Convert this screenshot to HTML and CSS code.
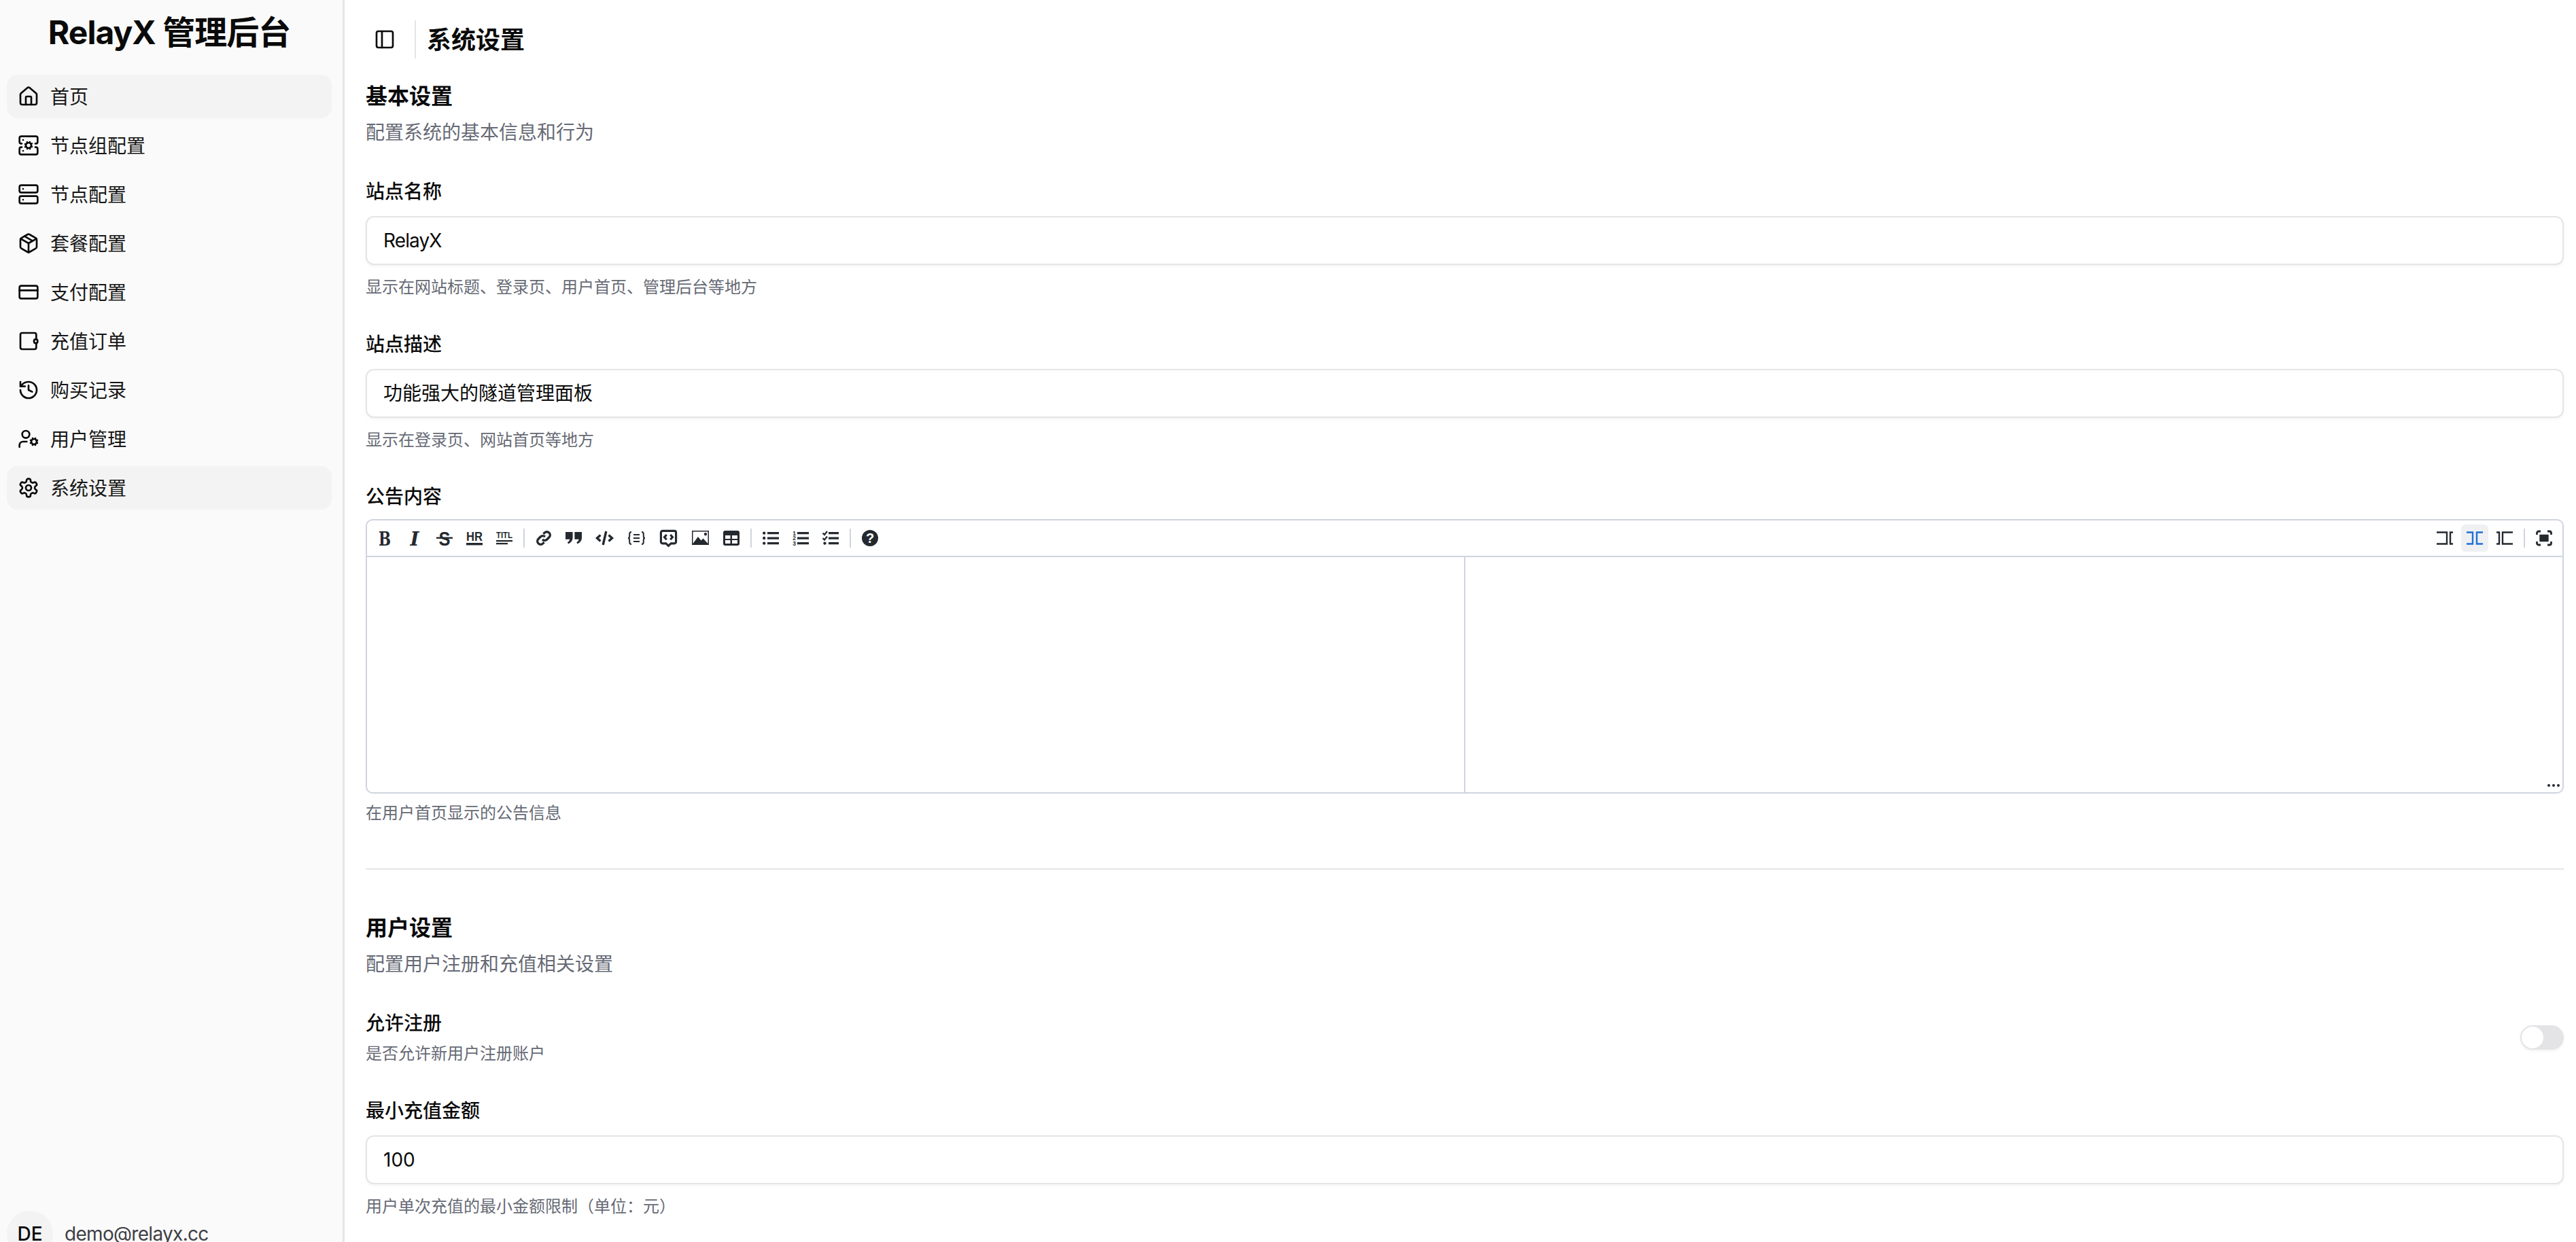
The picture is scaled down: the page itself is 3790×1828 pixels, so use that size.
FILE: index.html
```html
<!DOCTYPE html>
<html lang="zh-CN">
  <head>
    <meta charset="UTF-8" />
    <meta name="viewport" content="width=device-width, initial-scale=1.0" />
    <title>系统设置</title>
    <link rel="stylesheet" href="styles.css">
  </head>
  <body>
    <div class="layout">
      <!-- Sidebar -->
      <aside class="sidebar">
        <div class="brand">RelayX 管理后台</div>
        <nav class="nav">
          <a class="nav-item active">
            <svg class="lucide" viewBox="0 0 24 24"><path d="M15 21v-8a1 1 0 0 0-1-1h-4a1 1 0 0 0-1 1v8"/><path d="M3 10a2 2 0 0 1 .709-1.528l7-5.999a2 2 0 0 1 2.582 0l7 5.999A2 2 0 0 1 21 10v9a2 2 0 0 1-2 2H5a2 2 0 0 1-2-2z"/></svg>
            <span>首页</span>
          </a>
          <a class="nav-item">
            <svg class="lucide" viewBox="0 0 24 24"><circle cx="12" cy="12" r="3"/><path d="M4.5 10H4a2 2 0 0 1-2-2V4a2 2 0 0 1 2-2h16a2 2 0 0 1 2 2v4a2 2 0 0 1-2 2h-.5"/><path d="M4.5 14H4a2 2 0 0 0-2 2v4a2 2 0 0 0 2 2h16a2 2 0 0 0 2-2v-4a2 2 0 0 0-2-2h-.5"/><path d="M6 6h.01"/><path d="M6 18h.01"/><path d="m15.7 13.4-.9-.3"/><path d="m9.2 10.9-.9-.3"/><path d="m10.6 15.7.3-.9"/><path d="m13.6 15.7-.4-1"/><path d="m10.8 9.3-.4-1"/><path d="m8.3 13.6 1-.4"/><path d="m14.7 10.4 1-.4"/><path d="m13.4 8.3-.3.9"/></svg>
            <span>节点组配置</span>
          </a>
          <a class="nav-item">
            <svg class="lucide" viewBox="0 0 24 24"><rect x="2" y="2" width="20" height="8" rx="2"/><rect x="2" y="14" width="20" height="8" rx="2"/><path d="M6 6h.01"/><path d="M6 18h.01"/></svg>
            <span>节点配置</span>
          </a>
          <a class="nav-item">
            <svg class="lucide" viewBox="0 0 24 24"><path d="M11 21.73a2 2 0 0 0 2 0l7-4A2 2 0 0 0 21 16V8a2 2 0 0 0-1-1.73l-7-4a2 2 0 0 0-2 0l-7 4A2 2 0 0 0 3 8v8a2 2 0 0 0 1 1.73z"/><path d="M12 22V12"/><path d="m3.3 7 8.7 5 8.7-5"/><path d="m7.5 4.27 9 5.15"/></svg>
            <span>套餐配置</span>
          </a>
          <a class="nav-item">
            <svg class="lucide" viewBox="0 0 24 24"><rect x="2" y="5" width="20" height="14" rx="2"/><path d="M2 10h20"/></svg>
            <span>支付配置</span>
          </a>
          <a class="nav-item">
            <svg class="lucide" viewBox="0 0 24 24"><path d="M20.500 10V5a2 2 0 0 0-2-2H5a2 2 0 0 0-2 2v14a2 2 0 0 0 2 2h13.500a2 2 0 0 0 2-2v-4.600"/><rect x="18" y="10" width="4" height="4.400" rx="2"/></svg>
            <span>充值订单</span>
          </a>
          <a class="nav-item">
            <svg class="lucide" viewBox="0 0 24 24"><path d="M3 12a9 9 0 1 0 9-9 9.75 9.75 0 0 0-6.74 2.74L3 8"/><path d="M3 3v5h5"/><path d="M12 7v5l4 2"/></svg>
            <span>购买记录</span>
          </a>
          <a class="nav-item">
            <svg class="lucide" viewBox="0 0 24 24"><path d="M10 15H6a4 4 0 0 0-4 4v2"/><circle cx="9" cy="7" r="4"/><circle cx="18" cy="15" r="3"/><path d="m14.305 16.53.923-.382"/><path d="m15.228 13.852-.923-.383"/><path d="m16.852 12.228-.383-.923"/><path d="m16.852 17.772-.383.924"/><path d="m19.148 12.228.383-.923"/><path d="m19.53 18.696-.382-.924"/><path d="m20.772 13.852.924-.383"/><path d="m20.772 16.148.924.383"/></svg>
            <span>用户管理</span>
          </a>
          <a class="nav-item active">
            <svg class="lucide" viewBox="0 0 24 24"><path d="M12.22 2h-.44a2 2 0 0 0-2 2v.18a2 2 0 0 1-1 1.73l-.43.25a2 2 0 0 1-2 0l-.15-.08a2 2 0 0 0-2.73.73l-.22.38a2 2 0 0 0 .73 2.73l.15.1a2 2 0 0 1 1 1.72v.51a2 2 0 0 1-1 1.74l-.15.09a2 2 0 0 0-.73 2.73l.22.38a2 2 0 0 0 2.73.73l.15-.08a2 2 0 0 1 2 0l.43.25a2 2 0 0 1 1 1.73V20a2 2 0 0 0 2 2h.44a2 2 0 0 0 2-2v-.18a2 2 0 0 1 1-1.73l.43-.25a2 2 0 0 1 2 0l.15.08a2 2 0 0 0 2.73-.73l.22-.39a2 2 0 0 0-.73-2.73l-.15-.08a2 2 0 0 1-1-1.74v-.5a2 2 0 0 1 1-1.74l.15-.09a2 2 0 0 0 .73-2.73l-.22-.38a2 2 0 0 0-2.73-.73l-.15.08a2 2 0 0 1-2 0l-.43-.25a2 2 0 0 1-1-1.73V4a2 2 0 0 0-2-2z"/><circle cx="12" cy="12" r="3"/></svg>
            <span>系统设置</span>
          </a>
        </nav>
        <div class="account">
          <div class="avatar">DE</div>
          <div class="email">demo@relayx.cc</div>
        </div>
      </aside>

      <main class="main">
        <!-- Header -->
        <header class="topbar">
          <svg class="toggle" viewBox="0 0 24 24"><rect x="3" y="3" width="18" height="18" rx="2"/><path d="M9 3v18"/></svg>
          <div class="topbar-line"></div>
          <h1 class="page-title">系统设置</h1>
        </header>

        <section class="section">
          <h2 class="section-title">基本设置</h2>
          <p class="section-desc">配置系统的基本信息和行为</p>

          <div class="field">
            <div class="label">站点名称</div>
            <div class="input latin">RelayX</div>
            <div class="hint">显示在网站标题、登录页、用户首页、管理后台等地方</div>
          </div>

          <div class="field">
            <div class="label">站点描述</div>
            <div class="input">功能强大的隧道管理面板</div>
            <div class="hint">显示在登录页、网站首页等地方</div>
          </div>

          <div class="field">
            <div class="label label-tight">公告内容</div>
            <div class="editor">
              <div class="toolbar">
                <div class="tools">
                  <span class="tool"><svg viewBox="0 0 24 24"><text class="glyph-b" x="12" y="22.500" textLength="18" lengthAdjust="spacingAndGlyphs">B</text></svg></span>
                  <span class="tool"><svg viewBox="0 0 24 24"><text class="glyph-i" x="12" y="22.500" textLength="13" lengthAdjust="spacingAndGlyphs">I</text></svg></span>
                  <span class="tool"><svg viewBox="0 0 24 24"><text class="glyph-s" x="12" y="22.500" textLength="17" lengthAdjust="spacingAndGlyphs">S</text><path class="fill" d="M0 10.500h24v2.400H0z"/></svg></span>
                  <span class="tool"><svg viewBox="0 0 24 24"><text class="glyph-hr" x="12" y="15.500" textLength="24" lengthAdjust="spacingAndGlyphs">HR</text><path class="fill" d="M0 19h24v3.400H0z"/></svg></span>
                  <span class="tool"><svg viewBox="0 0 24 24"><text class="glyph-title" x="12" y="12" textLength="24" lengthAdjust="spacingAndGlyphs">TITL</text><path class="fill" d="M0 15h24v2.200H0zM0 19h17v2.200H0z"/></svg></span>
                  <span class="tool-sep"></span>
                  <span class="tool"><svg class="line" viewBox="0 0 24 24"><path d="M10 14a4.700 4.700 0 0 0 6.700 0l3.200-3.200a4.700 4.700 0 0 0-6.700-6.700l-1.800 1.800"/><path d="M14 10a4.700 4.700 0 0 0-6.700 0l-3.200 3.200a4.700 4.700 0 0 0 6.700 6.700l1.800-1.800"/></svg></span>
                  <span class="tool"><svg viewBox="0 0 24 24"><path class="fill" d="M0 3h10.600v8.700c0 3.600-2.200 6.600-6.400 8.800l-1.300-2.300c2-1.200 3.200-2.600 3.400-4.500H0zM13.400 3H24v8.700c0 3.600-2.200 6.600-6.400 8.800l-1.300-2.300c2-1.200 3.200-2.600 3.400-4.500h-6.300z"/></svg></span>
                  <span class="tool wide"><svg class="line" viewBox="0 0 27 24"><path d="M7.500 7.500 2.500 12l5 4.500"/><path d="M19.500 7.500l5 4.500-5 4.500"/><path d="M15.800 2l-4.600 20"/></svg></span>
                  <span class="tool wide"><svg class="line thin" viewBox="0 0 27 24"><path d="M6 3c-2.500 0-2.800 1.400-2.800 3v3.200c0 1.600-.6 2.800-2.200 2.800 1.600 0 2.200 1.200 2.200 2.800V18c0 1.600.3 3 2.800 3"/><path d="M21 3c2.500 0 2.800 1.400 2.800 3v3.200c0 1.600.6 2.800 2.200 2.800-1.600 0-2.200 1.200-2.200 2.800V18c0 1.600-.3 3-2.800 3"/><path d="M9 7h9M9 12h9M9 17h9"/></svg></span>
                  <span class="tool wide"><svg class="line" viewBox="0 0 27 26"><path d="M4 1.500h19a2.500 2.500 0 0 1 2.500 2.500v15a2.500 2.500 0 0 1-2.500 2.500h-5.500l-4 3.800-4-3.800H4A2.500 2.500 0 0 1 1.500 19V4A2.500 2.500 0 0 1 4 1.500z"/><path d="M10.500 7.500 7 11.500l3.500 4"/><path d="M16.500 7.500l3.500 4-3.500 4"/></svg></span>
                  <span class="tool wide"><svg viewBox="0 0 27 24"><path class="fill" fill-rule="evenodd" d="M1 1h25v21H1zM2.500 2.500V20l7.500-10 4.500 5.500 3-3L24.500 20V2.500zM21 4a2.200 2.200 0 1 1-.01 0z"/></svg></span>
                  <span class="tool"><svg viewBox="0 0 24 24"><path class="fill" fill-rule="evenodd" d="M3 1h18a3 3 0 0 1 3 3v16a3 3 0 0 1-3 3H3a3 3 0 0 1-3-3V4a3 3 0 0 1 3-3zM3 8v5h7.500V8zM13 8v5h8V8zM3 15v5h7.500v-5zM13 15v5h8v-5z"/></svg></span>
                  <span class="tool-sep"></span>
                  <span class="tool"><svg viewBox="0 0 24 24"><path class="fill" d="M7 3h17v3.200H7zM7 10.500h17v3.200H7zM7 18h17v3.200H7z"/><circle class="fill" cx="2.200" cy="4.600" r="2.200"/><circle class="fill" cx="2.200" cy="12" r="2.200"/><circle class="fill" cx="2.200" cy="19.600" r="2.200"/></svg></span>
                  <span class="tool"><svg viewBox="0 0 24 24"><path class="fill" d="M7 3h17v3.200H7zM7 10.500h17v3.200H7zM7 18h17v3.200H7z"/><text class="glyph-num" x="2.500" y="7.500">1</text><text class="glyph-num" x="2.500" y="15">2</text><text class="glyph-num" x="2.500" y="23">3</text></svg></span>
                  <span class="tool"><svg viewBox="0 0 24 24"><path class="fill" d="M9 3h15v3.200H9zM9 10.500h15v3.200H9zM9 18h15v3.200H9z"/><path class="check" d="M0.500 4.500 3 7l4-5M0.500 12 3 14.500l4-5"/><circle class="fill" cx="3.500" cy="19.600" r="2.200"/></svg></span>
                  <span class="tool-sep"></span>
                  <span class="tool"><svg viewBox="0 0 24 24"><circle class="fill" cx="12" cy="12" r="12"/><text class="glyph-help" x="12" y="19">?</text></svg></span>
                </div>
                <div class="tools">
                  <span class="tool"><svg viewBox="0 0 24 24"><path class="split" d="M0 3.500h15v17H0"/><path class="split" d="M24 3.500h-4v17h4"/></svg></span>
                  <span class="tool on"><svg viewBox="0 0 24 24"><path class="split" d="M0 3.500h9v17H0"/><path class="split" d="M24 3.500h-9v17h9"/></svg></span>
                  <span class="tool"><svg viewBox="0 0 24 24"><path class="split" d="M0 3.500h4v17H0"/><path class="split" d="M24 3.500H9v17h15"/></svg></span>
                  <span class="tool-sep"></span>
                  <span class="tool"><svg viewBox="0 0 24 24"><path class="frame" d="M1.500 7V4.500a2.500 2.500 0 0 1 2.500-2.500h3M17 2h3a2.500 2.500 0 0 1 2.500 2.500V7M22.500 17v2.500A2.500 2.500 0 0 1 20 22h-3M7 22H4a2.500 2.500 0 0 1-2.500-2.500V17"/><path class="fill" d="M6 6.700h12a.7.7 0 0 1 .7.7v9.200a.7.7 0 0 1-.7.7H6a.7.7 0 0 1-.7-.7V7.400a.7.7 0 0 1 .7-.7z"/></svg></span>
                </div>
              </div>
              <div class="panes">
                <div class="pane"></div>
                <div class="pane">
                  <div class="grip"><i></i><i></i><i></i></div>
                </div>
              </div>
            </div>
            <div class="hint hint-tight">在用户首页显示的公告信息</div>
          </div>
        </section>

        <hr class="divider" />

        <section class="section">
          <h2 class="section-title">用户设置</h2>
          <p class="section-desc">配置用户注册和充值相关设置</p>

          <div class="switch-row">
            <div>
              <div class="switch-label">允许注册</div>
              <div class="switch-hint">是否允许新用户注册账户</div>
            </div>
            <div class="switch"><div class="knob"></div></div>
          </div>

          <div class="field">
            <div class="label">最小充值金额</div>
            <div class="input">100</div>
            <div class="hint">用户单次充值的最小金额限制（单位：元）</div>
          </div>
        </section>
      </main>
    </div>
  </body>
</html>
```

FILE: styles.css
```css
html,
body {
  margin: 0;
  padding: 0;
  height: 100%;
  overflow: hidden;
}

body {
  font-family: Inter, "Noto Sans CJK SC", sans-serif;
  color: #0a0a0a;
  background-color: #fff;
}

.layout {
  display: flex;
  align-items: flex-start;
}

/* 侧边栏 */
.sidebar {
  flex: none;
  box-sizing: border-box;
  width: 507px;
  height: 1868px;
  display: flex;
  flex-direction: column;
  padding: 0 16px 18px 10px;
  background-color: #fafafa;
  border-right: 3px solid #e5e5e5;
}

.brand {
  height: 96px;
  line-height: 96px;
  text-align: center;
  font-size: 48px;
  font-weight: 700;
  letter-spacing: -1px;
  margin-bottom: 14px;
}

.nav {
  display: flex;
  flex-direction: column;
  gap: 8px;
}

.nav-item {
  display: flex;
  align-items: center;
  gap: 16px;
  height: 64px;
  padding: 0 16px;
  border-radius: 16px;
  font-size: 28px;
  color: #171717;
}

.nav-item span {
  padding-bottom: 3px;
}

.nav-item.active {
  background-color: #f3f3f3;
}

.lucide {
  flex: none;
  width: 32px;
  height: 32px;
  fill: none;
  stroke: #0a0a0a;
  stroke-width: 2;
  stroke-linecap: round;
  stroke-linejoin: round;
}

.account {
  margin-top: auto;
  display: flex;
  align-items: center;
  gap: 17px;
}

.avatar {
  width: 68px;
  height: 68px;
  border-radius: 50%;
  background-color: #f3f3f3;
  display: flex;
  align-items: center;
  justify-content: center;
  font-size: 28px;
  font-weight: 500;
}

.email {
  font-size: 28px;
  letter-spacing: -0.7px;
  color: #3f3f46;
}

/* 主内容 */
.main {
  flex: 1;
  min-width: 0;
  padding: 0 18px 0 31px;
}

.topbar {
  display: flex;
  align-items: center;
  height: 116px;
}

.toggle {
  width: 32px;
  height: 32px;
  margin-left: 12px;
  fill: none;
  stroke: #0a0a0a;
  stroke-width: 2;
  stroke-linecap: round;
  stroke-linejoin: round;
}

.topbar-line {
  width: 2px;
  height: 56px;
  margin: 0 16px 0 28px;
  background-color: #e5e5e5;
}

.page-title {
  margin: 0 0 4px;
  font-size: 36px;
  font-weight: 600;
}

.section-title {
  margin: 2px 0 9px;
  font-size: 32px;
  line-height: 48px;
  font-weight: 600;
}

.section-desc {
  margin: 0 0 47px;
  font-size: 28px;
  line-height: 40px;
  color: #666a75;
}

.field {
  margin-bottom: 48px;
}

.label {
  margin-bottom: 16px;
  font-size: 28px;
  line-height: 40px;
  font-weight: 500;
}

.label-tight {
  margin-top: -1px;
  margin-bottom: 13px;
}

.input {
  box-sizing: border-box;
  height: 72px;
  line-height: 68px;
  padding: 0 24px;
  border: 2px solid #e5e5e5;
  border-radius: 12px;
  background-color: #fff;
  box-shadow: 0 2px 4px rgba(0, 0, 0, 0.05);
  font-size: 28px;
}

.input.latin {
  letter-spacing: -0.9px;
}

.hint {
  margin-top: 17px;
  font-size: 24px;
  line-height: 32px;
  color: #666a75;
}

.hint-tight {
  margin-top: 13px;
}

/* 公告编辑器 */
.editor {
  box-sizing: border-box;
  height: 404px;
  display: flex;
  flex-direction: column;
  border: 2px solid #cfd4de;
  border-radius: 10px;
}

.toolbar {
  flex: none;
  box-sizing: border-box;
  height: 54px;
  padding: 0 5px 0 4px;
  display: flex;
  align-items: center;
  justify-content: space-between;
  border-bottom: 2px solid #cfd4de;
}

.tools {
  display: flex;
  align-items: center;
}

.tool {
  display: block;
  padding: 8px;
  margin: 0 2px;
  border-radius: 6px;
  line-height: 0;
}

.tool svg {
  display: block;
  width: 24px;
  height: 24px;
  overflow: visible;
}

.tool.wide svg {
  width: 27px;
}

.tool.on {
  background-color: #eef0f2;
}

.tool-sep {
  width: 2px;
  height: 28px;
  margin: 0 6px;
  background-color: #cfd4de;
}

.fill {
  fill: #24292f;
}

.line {
  fill: none;
  stroke: #24292f;
  stroke-width: 3.400;
}

.line.thin {
  stroke-width: 2;
}

.check {
  fill: none;
  stroke: #24292f;
  stroke-width: 2.200;
}

.split {
  fill: none;
  stroke: #24292f;
  stroke-width: 2.400;
}

.tool.on .split {
  stroke: #1f6fd6;
}

.frame {
  fill: none;
  stroke: #24292f;
  stroke-width: 2.800;
}

.tool text {
  fill: #24292f;
  text-anchor: middle;
  font-family: "Liberation Sans", sans-serif;
  font-weight: 700;
}

.tool .glyph-b {
  font-family: "DejaVu Serif", serif;
  font-size: 28px;
}

.tool .glyph-i {
  font-family: "DejaVu Serif", serif;
  font-style: italic;
  font-size: 28px;
}

.tool .glyph-s {
  font-size: 29px;
}

.tool .glyph-hr {
  font-size: 18px;
}

.tool .glyph-title {
  font-size: 12px;
}

.tool .glyph-num {
  font-size: 8.500px;
}

.tool .glyph-help {
  fill: #fff;
  font-size: 20px;
}

.panes {
  flex: 1;
  display: flex;
}

.pane {
  flex: 1;
  position: relative;
}

.pane:first-child {
  border-right: 2px solid #cfd4de;
}

.grip {
  position: absolute;
  right: 4px;
  bottom: 8px;
  display: flex;
  gap: 3px;
}

.grip i {
  width: 4px;
  height: 4px;
  border-radius: 50%;
  background-color: #24292f;
}

.divider {
  margin: 65px 0 62px;
  height: 2px;
  border: none;
  background-color: #e5e5e5;
}

/* 开关 */
.switch-row {
  display: flex;
  align-items: center;
  justify-content: space-between;
  margin-bottom: 48px;
}

.switch-label {
  font-size: 28px;
  line-height: 40px;
  font-weight: 500;
}

.switch-hint {
  margin-top: 9px;
  font-size: 24px;
  line-height: 32px;
  color: #666a75;
}

.switch {
  box-sizing: border-box;
  width: 64px;
  height: 36px;
  padding: 2px;
  border-radius: 18px;
  background-color: #e4e4e7;
  box-shadow: 0 2px 4px rgba(0, 0, 0, 0.05);
}

.knob {
  width: 32px;
  height: 32px;
  border-radius: 50%;
  background-color: #fff;
}
```
